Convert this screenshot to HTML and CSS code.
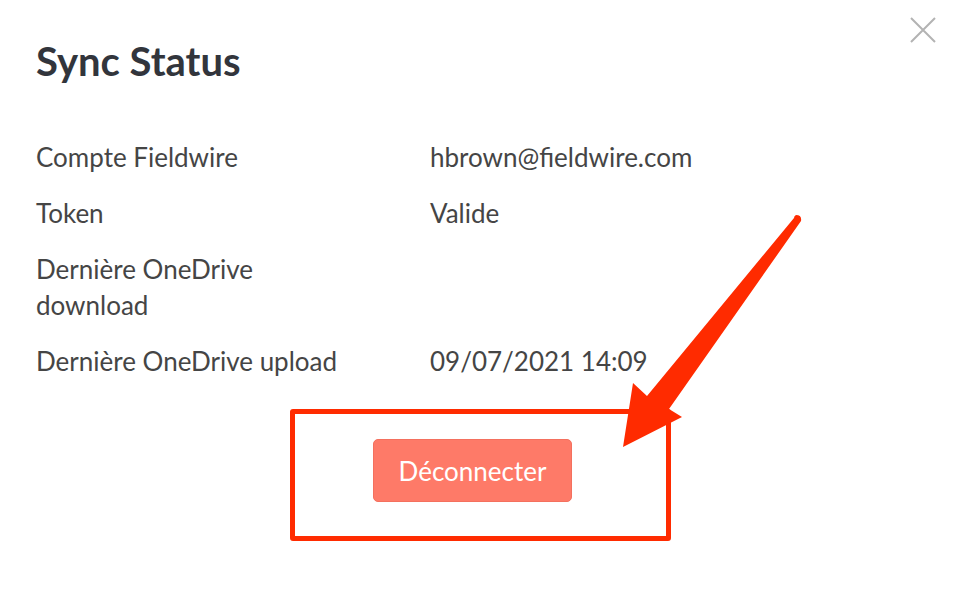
FILE: index.html
```html
<!DOCTYPE html>
<html lang="fr">
<head>
<meta charset="utf-8">
<title>Sync Status</title>
<link rel="stylesheet" href="styles.css">
</head>
<body>
<div class="modal">
  <button class="close" aria-label="Fermer">
    <svg width="28" height="28" viewBox="0 0 28 28"><path d="M2 2 L26 26 M26 2 L2 26" stroke="#b3b3b3" stroke-width="2" fill="none"/></svg>
  </button>
  <h1 class="title">Sync Status</h1>
  <div class="rows">
    <div class="label">Compte Fieldwire</div><div class="value">hbrown@fieldwire.com</div>
    <div class="label">Token</div><div class="value">Valide</div>
    <div class="label">Dernière OneDrive download</div><div class="value"></div>
    <div class="label">Dernière OneDrive upload</div><div class="value">09/07/2021 14:09</div>
  </div>
  <div class="highlight">
    <button class="disconnect">Déconnecter</button>
  </div>
  <svg class="arrow" width="960" height="596" viewBox="0 0 960 596">
    <path d="M796 215 Q802 215 801 221 L669 409 L682 417 L623 447 L633 383 L647 396 L794 218 Q794 216 796 215 Z" fill="#ff2b00"/>
  </svg>
</div>
</body>
</html>
```

FILE: styles.css
```css
html, body {
  margin: 0;
  padding: 0;
  background: #ffffff;
}
body {
  font-family: Lato, "Open Sans", sans-serif;
  width: 960px;
  height: 596px;
  overflow: hidden;
}
.modal {
  position: relative;
  width: 960px;
  height: 596px;
  padding: 38px 0 0 36px;
  box-sizing: border-box;
}
.close {
  position: absolute;
  top: 16px;
  left: 909px;
  width: 28px;
  height: 28px;
  padding: 0;
  border: 0;
  background: none;
}
.close svg { display: block; }
.title {
  margin: 0;
  font-size: 40px;
  line-height: 46px;
  font-weight: 700;
  color: #32353c;
}
.rows {
  margin-top: 55px;
  display: grid;
  grid-template-columns: 320px auto;
  column-gap: 74px;
  row-gap: 20px;
  font-size: 26px;
  line-height: 36px;
  color: #454545;
}
.highlight {
  margin: 30px 0 0 254px;
  width: 381px;
  height: 132px;
  border: 5px solid #ff2b00;
  border-radius: 3px;
  padding: 25px 0 0 78px;
  box-sizing: border-box;
}
.disconnect {
  display: block;
  width: 199px;
  height: 63px;
  background: #fe7a68;
  border: 1px solid #f4705e;
  border-radius: 5px;
  color: #ffffff;
  font-family: Lato, "Open Sans", sans-serif;
  font-size: 26px;
  padding: 0;
}
.arrow {
  position: absolute;
  left: 0;
  top: 0;
  pointer-events: none;
}
```
